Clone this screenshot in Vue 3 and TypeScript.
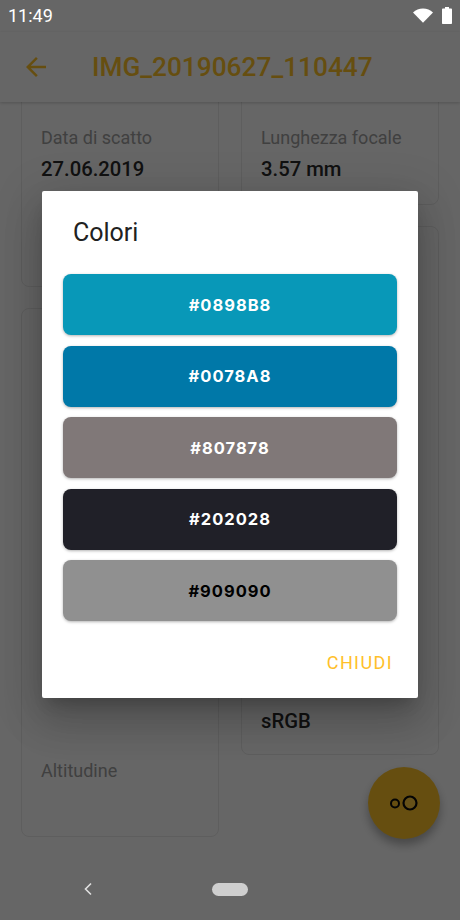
<script setup lang="ts">
interface Info { label?: string; value?: string; height: number; end?: boolean }
const left: Info[] = [
  { label: 'Data di scatto', value: '27.06.2019', height: 195 },
  { label: 'Altitudine', height: 529, end: true },
]
const right: Info[] = [
  { label: 'Lunghezza focale', value: '3.57 mm', height: 113 },
  { value: 'sRGB', height: 529, end: true },
]
const swatches = [
  { hex: '#0898B8', ink: '#ffffff' },
  { hex: '#0078A8', ink: '#ffffff' },
  { hex: '#807878', ink: '#ffffff' },
  { hex: '#202028', ink: '#ffffff' },
  { hex: '#909090', ink: '#000000' },
]
</script>

<template>
  <div class="phone">
    <div class="status">
      <span class="time">11:49</span>
      <div class="status-icons">
        <svg class="wifi" width="20" height="16" viewBox="0 0 20 16"><path d="M0 5.600C2.700 3.100 6.200 1.600 10 1.600s7.300 1.500 10 4L10 15.700z" fill="#fff" /></svg>
        <svg class="battery" width="10" height="17" viewBox="0 0 10 17"><path d="M3 0h4v1.600h2.200c.5 0 .8.3.8.8V16c0 .5-.3 1-.8 1H.8C.3 17 0 16.500 0 16V2.400c0-.5.3-.8.8-.8H3z" fill="#fff" /></svg>
      </div>
    </div>

    <header class="appbar">
      <svg class="back" width="30" height="30" viewBox="0 0 24 24"><path d="M20 11H7.830l5.590-5.590L12 4l-8 8 8 8 1.410-1.410L7.830 13H20v-2z" /></svg>
      <h1 class="title">IMG_20190627_110447</h1>
    </header>

    <main class="content">
      <div class="column">
        <section v-for="c in left" :key="c.height" class="card" :class="{ 'card-end': c.end, 'card-label-end': c.end }" :style="{ height: c.height + 'px' }">
          <div v-if="c.label" class="label">{{ c.label }}</div>
          <div v-if="c.value" class="value">{{ c.value }}</div>
        </section>
      </div>
      <div class="column">
        <section v-for="c in right" :key="c.height" class="card" :class="{ 'card-end': c.end }" :style="{ height: c.height + 'px' }">
          <div v-if="c.label" class="label">{{ c.label }}</div>
          <div v-if="c.value" class="value">{{ c.value }}</div>
        </section>
      </div>
    </main>

    <nav class="navbar">
      <svg class="chevron" width="10" height="14" viewBox="0 0 10 14"><path d="M8 1.500 2.500 7 8 12.500" fill="none" stroke="#e0e0e0" stroke-width="1.600" /></svg>
      <div class="pill"></div>
    </nav>

    <button class="fab" aria-label="Colori">
      <svg width="40" height="24" viewBox="0 0 40 24">
        <circle cx="11" cy="12.500" r="4" fill="none" stroke="#0c0c0c" stroke-width="2" />
        <circle cx="26" cy="12" r="6.500" fill="#fff" fill-opacity=".1" stroke="#0c0c0c" stroke-width="2.200" />
      </svg>
    </button>

    <div class="scrim"></div>

    <div class="dialog-wrap">
      <div class="dialog">
        <h2 class="dialog-title">Colori</h2>
        <div class="swatches">
          <div v-for="s in swatches" :key="s.hex" class="swatch" :style="{ background: s.hex, color: s.ink }">{{ s.hex }}</div>
        </div>
        <div class="actions"><span class="close">CHIUDI</span></div>
      </div>
    </div>
  </div>
</template>

<style scoped>
.phone {
  position: relative;
  width: 460px;
  height: 920px;
  display: flex;
  flex-direction: column;
  background: #fff;
  overflow: hidden;
  font-family: Roboto, sans-serif;
}
.status {
  position: relative;
  z-index: 3;
  height: 32px;
  flex: none;
  display: flex;
  align-items: center;
  justify-content: space-between;
  padding: 0 8px;
}
.time { color: #fff; font-size: 18px; line-height: 32px; }
.status-icons { display: flex; align-items: center; gap: 9px; margin-top: -2px; }
.appbar {
  position: relative;
  z-index: 1;
  height: 70px;
  flex: none;
  display: flex;
  align-items: center;
  padding-left: 21px;
  background: #fff;
  box-shadow: 0 1px 3px rgba(0, 0, 0, .2);
}
.back { fill: #FFC42A; flex: none; }
.title {
  margin: 0 0 0 41px;
  font-size: 26.250px;
  font-weight: 500;
  color: #FFC42A;
  white-space: nowrap;
}
.content {
  flex: 1;
  min-height: 0;
  display: flex;
  gap: 22px;
  padding: 0 21px;
  overflow: hidden;
}
.column {
  width: 198px;
  flex: none;
  display: flex;
  flex-direction: column;
  gap: 21px;
  margin-top: -10px;
}
.card {
  box-sizing: border-box;
  flex: none;
  border: 1px solid #ebebeb;
  border-radius: 8px;
  padding: 34px 19px 0;
}
.card-end {
  display: flex;
  flex-direction: column;
  justify-content: flex-end;
  padding-top: 0;
  padding-bottom: 20px;
}
.card-label-end { padding-bottom: 54px; }
.label { font-size: 18px; line-height: 22px; color: #a0a0a0; }
.value { font-size: 20.250px; font-weight: 500; line-height: 26px; margin-top: 7px; color: #2b2b2b; }
.navbar {
  position: relative;
  z-index: 3;
  height: 60px;
  flex: none;
  display: flex;
  align-items: center;
  justify-content: center;
}
.chevron { position: absolute; left: 83px; top: 22px; }
.pill { width: 36px; height: 13px; border-radius: 7px; background: #cfcfcf; margin-top: -2px; }
.fab {
  position: absolute;
  left: 368px;
  top: 767px;
  width: 72px;
  height: 72px;
  border: 0;
  padding: 0;
  border-radius: 50%;
  background: #FFC42A;
  display: flex;
  align-items: center;
  justify-content: center;
  box-shadow: 0 6px 10px rgba(0, 0, 0, .3);
}
.scrim {
  position: absolute;
  inset: 0;
  z-index: 2;
  background: rgba(0, 0, 0, .6);
}
.dialog-wrap {
  position: absolute;
  inset: 0;
  z-index: 4;
  padding: 191px 42px 0;
  box-sizing: border-box;
}
.dialog {
  background: #fff;
  border-radius: 2px;
  height: 507px;
  display: flex;
  flex-direction: column;
  box-shadow: 0 11px 15px -7px rgba(0, 0, 0, .2), 0 24px 38px 3px rgba(0, 0, 0, .14), 0 9px 46px 8px rgba(0, 0, 0, .12);
}
.dialog-title {
  margin: 0;
  padding: 25px 0 0 31px;
  font-size: 25px;
  font-weight: 400;
  line-height: 34px;
  height: 83px;
  box-sizing: border-box;
  color: #212121;
}
.swatches {
  display: flex;
  flex-direction: column;
  gap: 10.500px;
  padding: 0 21px;
}
.swatch {
  height: 61px;
  border-radius: 8px;
  display: flex;
  align-items: center;
  justify-content: center;
  font-family: Inter, sans-serif;
  font-size: 16.500px;
  font-weight: 700;
  letter-spacing: 1px;
  box-shadow: 0 1px 3px rgba(0, 0, 0, .3);
}
.actions {
  flex: 1;
  display: flex;
  justify-content: flex-end;
  align-items: flex-start;
  padding: 31px 25px 0 0;
}
.close {
  font-size: 18px;
  font-weight: 400;
  line-height: 22px;
  letter-spacing: 1.400px;
  color: #FFC02A;
}
</style>
